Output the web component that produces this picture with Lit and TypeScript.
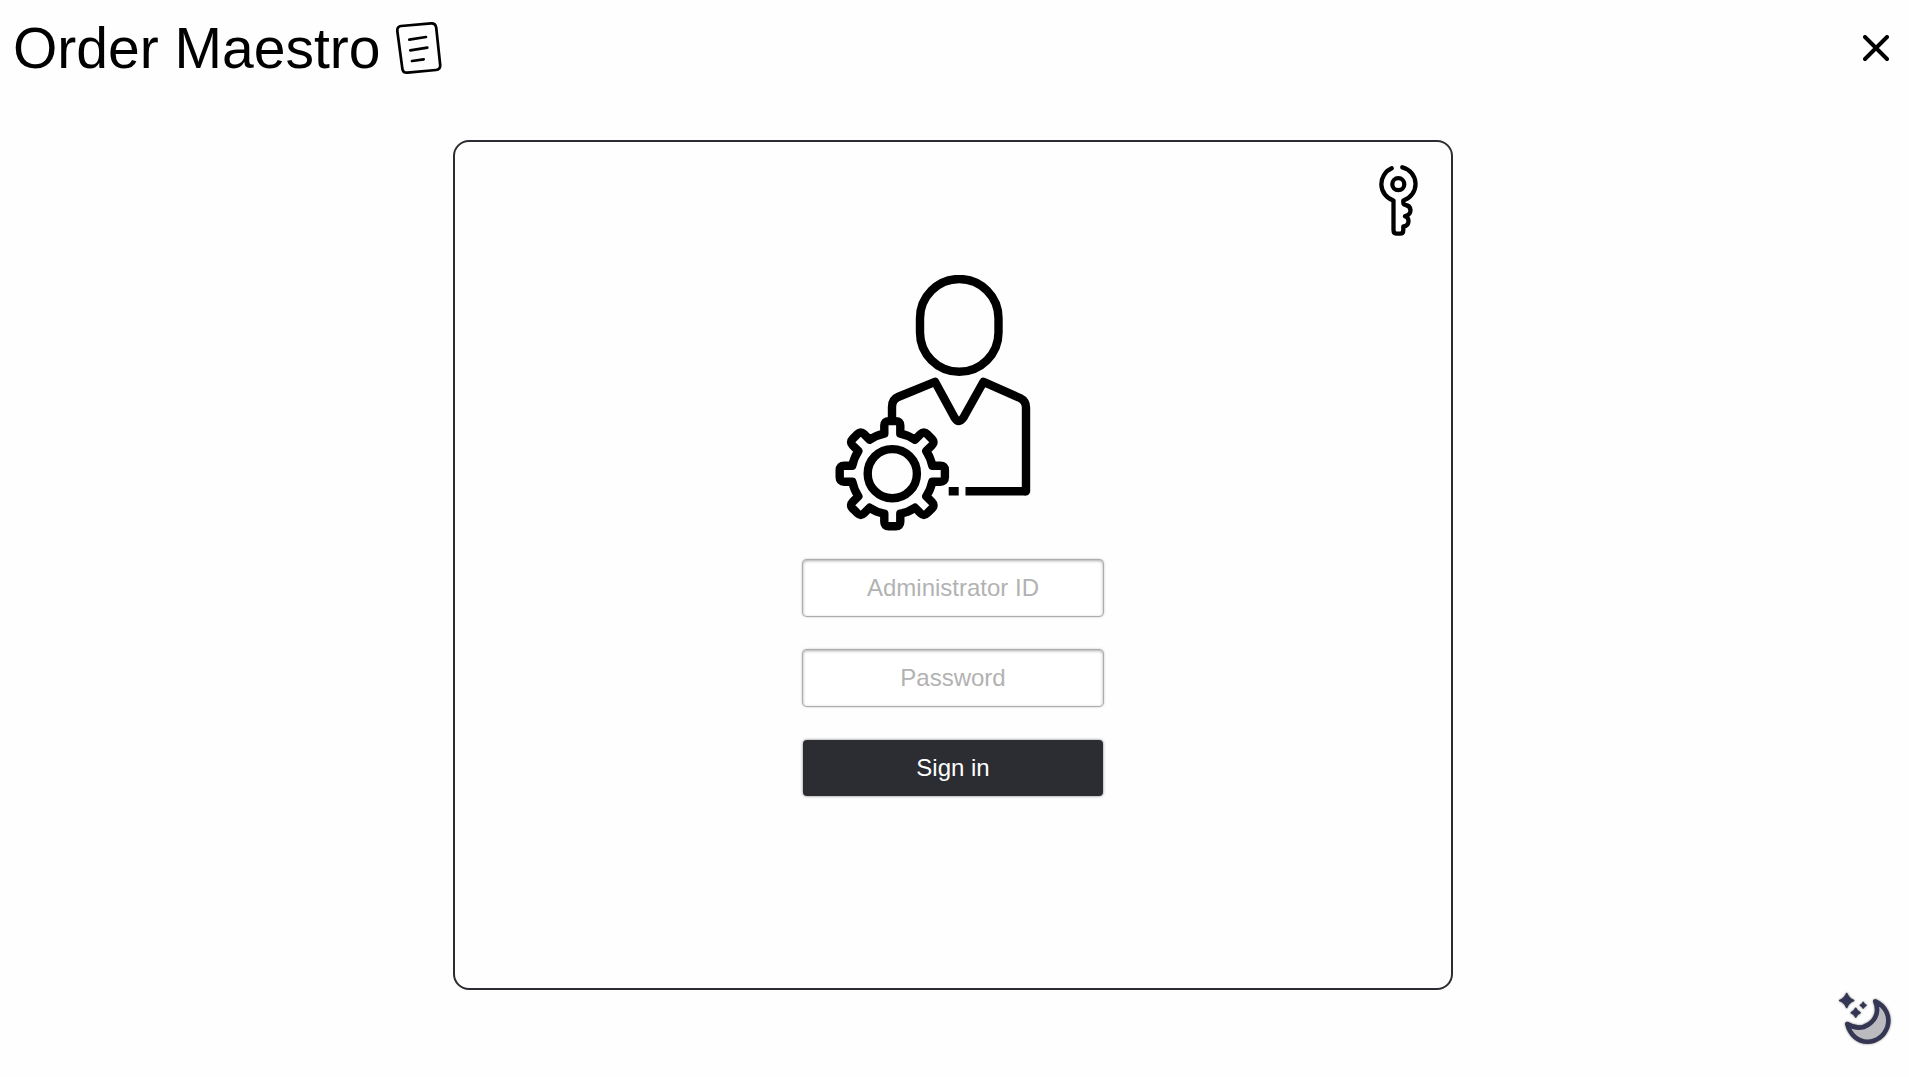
import { LitElement, html, css, svg } from "lit";
import { customElement } from "lit/decorators.js";

// Eight-toothed gear outline around (72.3, 213.7).
const gearPath = (() => {
  const cx = 72.3;
  const cy = 213.7;
  const root = 40;
  const tip = 52.6;
  const half = 8;
  const round = 4.5;
  const parts: string[] = [];
  for (let i = 0; i < 8; i++) {
    const a = (i * Math.PI) / 4;
    const at = (along: number, across: number) => {
      const x = cx + along * Math.sin(a) + across * Math.cos(a);
      const y = cy - along * Math.cos(a) + across * Math.sin(a);
      return `${x.toFixed(2)} ${y.toFixed(2)}`;
    };
    parts.push(
      `${i ? "A41 41 0 0 1 " : "M"}${at(root, -half)}`,
      `L${at(tip - round, -half)}`,
      `Q${at(tip, -half)} ${at(tip, -half + round)}`,
      `L${at(tip, half - round)}`,
      `Q${at(tip, half)} ${at(tip - round, half)}`,
      `L${at(root, half)}`,
    );
  }
  return `${parts.join("")}A41 41 0 0 1 ${cx - half} ${cy - root}Z`;
})();

// Four-pointed star with slightly concave, rounded sides.
const star = (x: number, y: number, r: number) => {
  const k = r * 0.26;
  return `M${x} ${y - r}Q${x + k} ${y - k} ${x + r} ${y}Q${x + k} ${y + k} ${x} ${y + r}Q${x - k} ${y + k} ${x - r} ${y}Q${x - k} ${y - k} ${x} ${y - r}Z`;
};

const noteIcon = svg`
  <svg class="icon note" viewBox="396 21 46 54" aria-hidden="true">
    <path d="M401 26 L431 23.3 Q435.500 23 436.200 27.500 L440.200 65 Q440.500 69.500 436 70 L407.500 72.700 Q403 73 402.400 69 L397.300 31 Q397 26.500 401 26Z" />
    <path d="M409.300 39.700 L426 37 M410.300 50.300 L427.300 47.700 M412 61 L423.700 59.300" />
  </svg>`;

const closeIcon = svg`
  <svg class="icon cross" viewBox="0 0 26 26" aria-hidden="true">
    <path d="M2 2 L24 24 M24 2 L2 24" />
  </svg>`;

const keyIcon = svg`
  <svg class="icon key" viewBox="39 35 40 72" aria-hidden="true">
    <path d="M51.700 38.300 A17.200 17.200 0 0 0 53.500 70.500 V100 Q53.500 103.700 57 103.700 H60 Q63.300 103.700 63.300 100 V96.500 Q68.500 96 68.500 91 Q68.500 87.500 65 86.200 Q70.500 85 70.500 80 Q70 75.500 65.500 75 Q63.300 74.500 63.300 72.500 V70.500 A17.200 17.200 0 0 0 62.300 37.300" />
    <circle cx="58.300" cy="54.200" r="6" />
  </svg>`;

const adminIcon = svg`
  <svg class="icon admin" viewBox="13 15 240 256" aria-hidden="true">
    <rect x="100" y="19" width="78.500" height="92.700" rx="39.250" ry="39.250" />
    <path d="M72 158 V147 Q72 139.500 78 137 L115 121.800 L134.500 157.500 Q138.800 164.500 143.500 157.500 L163.500 121.800 L200 138 Q206 141 206 147.500 V231.300" />
    <path class="square" d="M206 231.300 H145.500 M138.700 231.300 H128.700" />
    <path d="${gearPath}" />
    <circle cx="72.300" cy="213.700" r="24.600" />
  </svg>`;

const moonIcon = svg`
  <svg class="icon moon" viewBox="16 10 56 56" aria-hidden="true">
    <path class="crescent" d="M55.300 21.300 C66 26 70.500 37 67.300 47 C64 56.500 56 61.700 47.500 61.700 C38 61.700 30 55 27.300 44 C34 48 42 49 48.500 44.500 C57 39 59 30 55.300 21.300Z" />
    <path class="star" d="${star(26.7, 20.5, 7)}" />
    <path class="star" d="${star(35.7, 32.7, 4.4)}" />
    <path class="star" d="${star(43.2, 25.2, 2.8)}" />
  </svg>`;

@customElement("app-root")
export class AppRoot extends LitElement {
  static styles = css`
    :host {
      display: block;
      font-family: "Liberation Sans", Arial, sans-serif;
      color: #000;
    }
    * {
      box-sizing: border-box;
    }
    .page {
      display: flex;
      flex-direction: column;
      min-height: 100vh;
      padding: 0 15px 0 12px;
      background: #fefefe;
    }
    .header {
      display: flex;
      align-items: center;
      justify-content: space-between;
      height: 96px;
      padding-left: 1px;
    }
    .brand {
      display: flex;
      align-items: center;
      gap: 16px;
    }
    .title {
      margin: 0;
      font-size: 57px;
      font-weight: 400;
      line-height: 64px;
    }
    .icon {
      display: block;
      fill: none;
      stroke: currentColor;
      stroke-linecap: round;
      stroke-linejoin: round;
    }
    .note {
      width: 46px;
      height: 54px;
      stroke-width: 2.7;
    }
    .cross {
      width: 26px;
      height: 26px;
      stroke-width: 3.9;
    }
    .key {
      align-self: flex-end;
      width: 40px;
      height: 72px;
      stroke-width: 4.3;
    }
    .admin {
      width: 240px;
      height: 256px;
      margin: 38px 0 29px;
      stroke-width: 8.4;
    }
    .square {
      stroke-linecap: butt;
    }
    .moon {
      width: 56px;
      height: 56px;
      color: #343653;
      filter: drop-shadow(0 0 1px rgba(0, 0, 0, 0.5));
    }
    .crescent {
      fill: #bbbabf;
      stroke-width: 4.6;
    }
    .star {
      fill: currentColor;
      stroke-width: 1.6;
    }
    .icon-button {
      padding: 5px;
      border: 0;
      background: none;
      color: inherit;
      cursor: pointer;
    }
    .card {
      display: flex;
      flex-direction: column;
      align-items: center;
      width: 100%;
      max-width: 1000px;
      margin: 44px auto 0;
      padding: 23px 32px 192px;
      border: 2px solid #2c2d32;
      border-radius: 16px;
    }
    .form {
      display: flex;
      flex-direction: column;
      gap: 34px;
      width: 100%;
      max-width: 300px;
    }
    .field,
    .submit {
      width: 100%;
      height: 56px;
      border-radius: 4px;
      font-family: inherit;
      font-size: 24px;
      text-align: center;
    }
    .field {
      padding: 0 12px;
      border: 0;
      background: #fff;
      color: #2c2d32;
      box-shadow: 0 0 0 1px #adadad, 0 0 3px #777, inset 0 1px 3px #aaa;
    }
    .field::placeholder {
      color: #b2b2b2;
      opacity: 1;
    }
    .submit {
      padding: 0;
      border: 0;
      background: #2c2d32;
      color: #fff;
      box-shadow: 0 0 3px #777;
      cursor: pointer;
    }
    .footer {
      display: flex;
      justify-content: flex-end;
    }
    .footer .icon-button {
      padding: 0 2px;
    }
  `;

  private submit(event: Event) {
    event.preventDefault();
  }

  render() {
    return html`
      <div class="page">
        <header class="header">
          <div class="brand">
            <h1 class="title">Order Maestro</h1>
            ${noteIcon}
          </div>
          <button class="icon-button" type="button" aria-label="Close">${closeIcon}</button>
        </header>
        <main class="card">
          ${keyIcon} ${adminIcon}
          <form class="form" @submit=${this.submit}>
            <input
              class="field"
              type="text"
              name="admin-id"
              placeholder="Administrator ID"
              aria-label="Administrator ID"
              autocomplete="username"
            />
            <input
              class="field"
              type="password"
              name="password"
              placeholder="Password"
              aria-label="Password"
              autocomplete="current-password"
            />
            <button class="submit" type="submit">Sign in</button>
          </form>
        </main>
        <footer class="footer">
          <button class="icon-button" type="button" aria-label="Dark mode">${moonIcon}</button>
        </footer>
      </div>
    `;
  }
}
